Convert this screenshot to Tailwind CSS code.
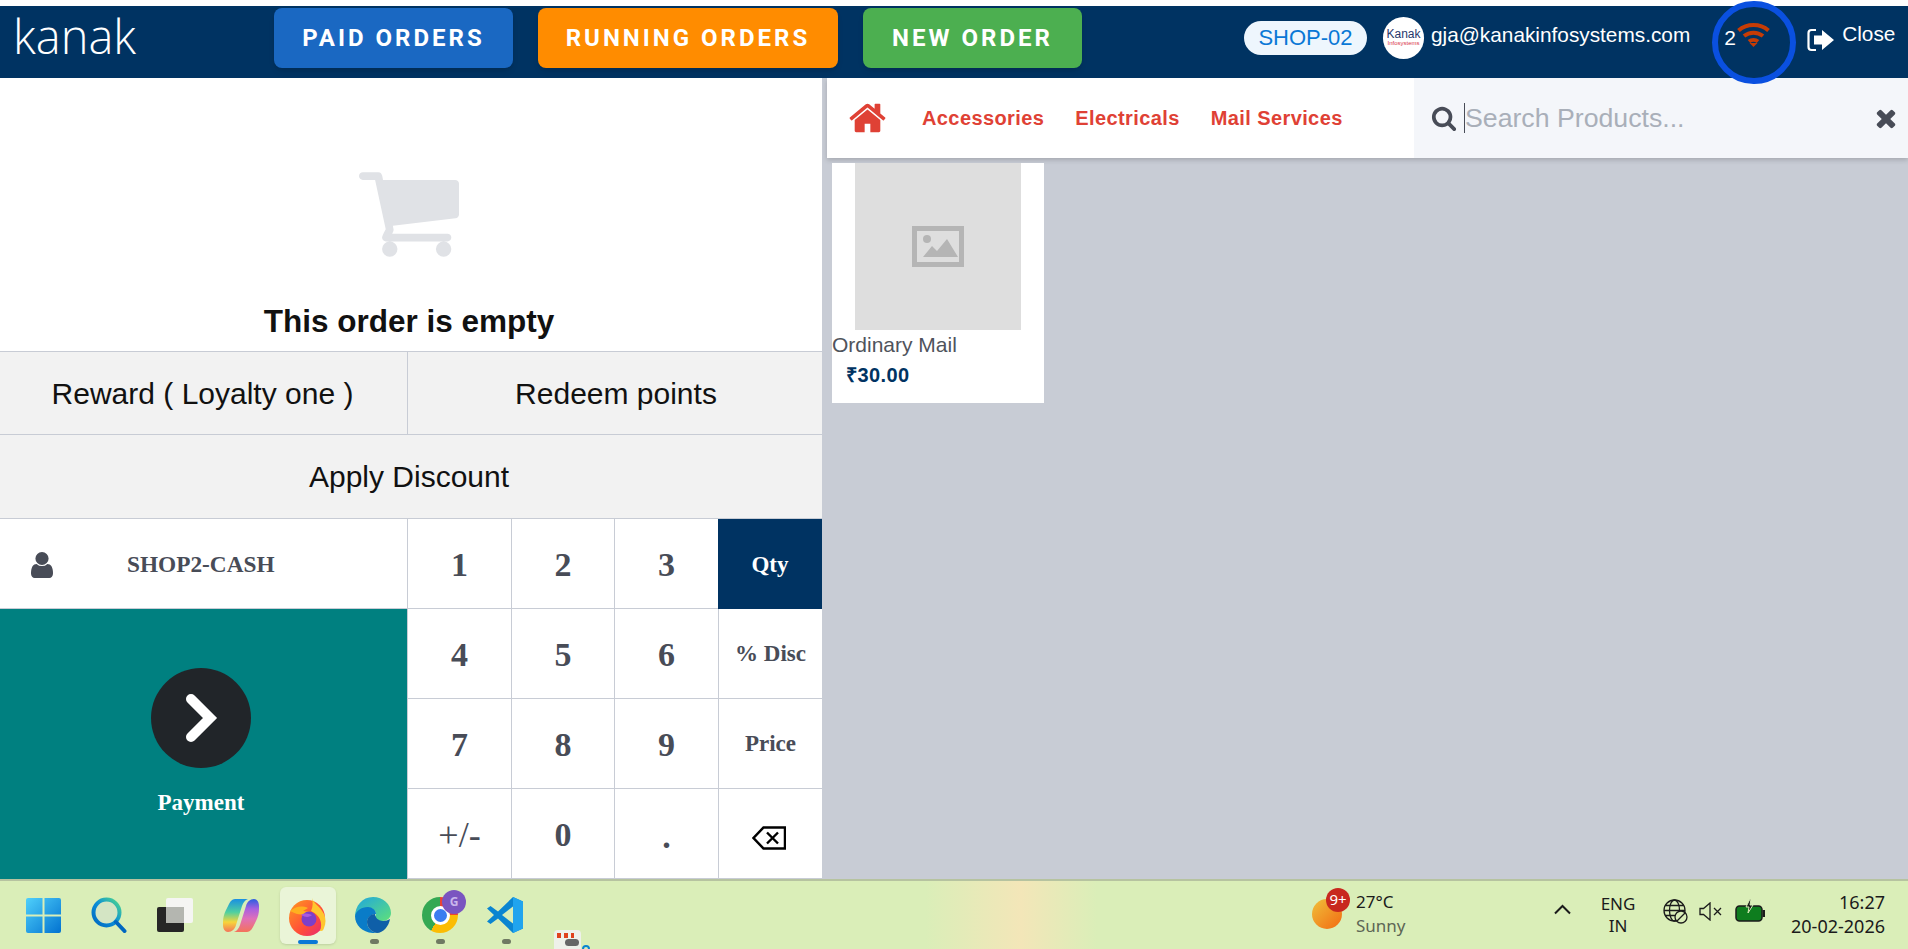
<!DOCTYPE html>
<html lang="en">
<head>
<meta charset="utf-8">
<title>POS</title>
<script src="https://cdn.jsdelivr.net/npm/@tailwindcss/browser@4"></script>
</head>
<body class="w-[1908px] h-[949px] overflow-hidden bg-white font-['Liberation_Sans',Arial,sans-serif]">
<div class="h-[6px] bg-white"></div>
<!-- header -->
<header class="relative h-[72px] bg-[#003362] flex items-start text-white">
  <div class="w-[274px] h-full pl-[13px] pt-[1px] font-['Open_Sans',sans-serif] font-light text-[47px] leading-[58px]">kanak</div>
  <div class="flex gap-[25px] pt-[2px] font-['Roboto',sans-serif] font-bold text-[24px] tracking-[3px]">
    <button class="w-[239px] h-[60px] rounded-lg bg-[#1a68c2] shadow-md">PAID ORDERS</button>
    <button class="w-[300px] h-[60px] rounded-lg bg-[#ff8c00] shadow-md">RUNNING ORDERS</button>
    <button class="w-[219px] h-[60px] rounded-lg bg-[#4caf50] shadow-md">NEW ORDER</button>
  </div>
  <div class="ml-[162px] mt-[15px] w-[123px] h-[34px] rounded-full bg-[#eef6fd] text-[#0a78d6] text-[22px] leading-[34px] text-center">SHOP-02</div>
  <div class="ml-[16px] mt-[11px] w-[41px] h-[42px] rounded-full bg-white flex flex-col items-center justify-center text-center overflow-hidden">
    <span class="text-[#27386b] text-[12px] leading-[11px] font-medium">Kanak</span>
    <span class="text-[#d8344a] text-[6px] leading-[7px] whitespace-nowrap">Infosystems</span>
  </div>
  <div class="ml-[7px] mt-[15px] text-[20.8px] leading-[28px] whitespace-nowrap">gja@kanakinfosystems.com</div>
  <div class="ml-[34px] mt-[20px] w-[13px] text-[21px] leading-[24px]">2</div>
  <svg class="mt-[17px] w-[33px] h-[24px]" viewBox="0 0 33 24" fill="none" stroke="#c63c05" stroke-width="4"><path d="M1.500 7.500C10 .2 23 .2 31.500 7.500"/><path d="M7 13C12.500 8.500 20.500 8.500 26 13"/><path d="M12 18.500C14.500 16.500 18.500 16.500 21 18.500"/><path d="M12.500 20h8l-4 4z" fill="#c63c05" stroke="none"/></svg>
  <svg class="ml-[37px] mt-[21px] w-[27px] h-[26px]" viewBox="0 0 27 26"><path d="M9 3H4.500C2.500 3 1.500 4 1.500 6v14c0 2 1 3 3 3H9" fill="none" stroke="#fff" stroke-width="2.200"/><path d="M7 8.500h8V3l12 10-12 10v-5.500H7z" fill="#fff"/></svg>
  <div class="ml-[8px] mt-[14px] text-[20.8px] leading-[28px]">Close</div>
  <!-- highlight ring over the header -->
  <div class="absolute left-[1712px] top-[-5px] w-[84px] h-[83px] rounded-full border-[6px] border-[#0a50e0]"></div>
</header>
<!-- main -->
<main class="h-[801px] flex bg-[#c8ccd5]">
  <section class="w-[822px] bg-white flex flex-col">
    <div class="h-[273px] pr-[4px] flex flex-col items-center">
      <svg class="mt-[94px] w-[100px] h-[85px]" viewBox="64 256 1664 1408" fill="#e0e2e6"><path d="M704 1536q0 52-38 90t-90 38-90-38-38-90 38-90 90-38 90 38 38 90zm896 0q0 52-38 90t-90 38-90-38-38-90 38-90 90-38 90 38 38 90zm128-1088v512q0 24-16.500 42.500t-40.500 21.500l-1044 122q13 60 13 70 0 16-24 64h920q26 0 45 19t19 45-19 45-45 19h-1024q-26 0-45-19t-19-45q0-11 8-31.500t16-36 21.500-40 15.500-29.500l-177-823h-204q-26 0-45-19t-19-45 19-45 45-19h256q16 0 28.500 6.500t19.500 15.500 13 24.500 8 26 5.500 29.500 4.500 26h1201q26 0 45 19t19 45z"/></svg>
      <h2 class="mt-[44px] text-[31.5px] leading-[40px] font-bold text-[#111] whitespace-nowrap">This order is empty</h2>
    </div>
    <div class="h-[83px] flex border-t border-[#c8ccd5] bg-[#f2f2f2] text-[#111] text-[30px]">
      <div class="w-[408px] pr-[2px] border-r border-[#c8ccd5] flex items-center justify-center">Reward ( Loyalty one )</div>
      <div class="flex-1 pl-[2px] flex items-center justify-center">Redeem points</div>
    </div>
    <div class="h-[85px] pr-[4px] flex items-center justify-center border-t border-[#c8ccd5] border-b bg-[#f2f2f2] text-[#111] text-[30px]">Apply Discount</div>
    <div class="flex-1 flex font-['Liberation_Serif',serif] font-bold text-[#484c57]">
      <div class="w-[407px] flex flex-col">
        <div class="h-[90px] pt-[2px] flex items-center border-b border-[#c8ccd5] text-[23.3px]">
          <svg class="ml-[31px] w-[22px] h-[26px]" viewBox="256 128 1280 1536" preserveAspectRatio="none" fill="#484c57"><path d="M1536 1399q0 109-62.500 187t-150.500 78h-854q-88 0-150.500-78t-62.500-187q0-85 8.500-160.500t31.500-152 58.500-131 94-89 134.500-34.500q131 128 313 128t313-128q76 0 134.500 34.500t94 89 58.500 131 31.500 152 8.500 160.500zm-256-887q0 159-112.500 271.500t-271.500 112.500-271.500-112.500-112.500-271.500 112.500-271.500 271.500-112.500 271.500 112.500 112.500 271.500z"/></svg>
          <span class="ml-[74px]">SHOP2-CASH</span>
        </div>
        <div class="flex-1 bg-[#008080] flex flex-col items-center pt-[59px] pr-[5px] text-white">
          <div class="w-[100px] h-[100px] rounded-full bg-[#212529] flex items-center justify-center">
            <svg class="w-[34px] h-[50px]" viewBox="0 0 34 50" fill="none" stroke="#fff" stroke-width="10" stroke-linecap="round" stroke-linejoin="miter"><path d="M7 6l19 19L7 44"/></svg>
          </div>
          <div class="mt-[21px] text-[23px] leading-[28px]">Payment</div>
        </div>
      </div>
      <div class="w-[415px] grid grid-cols-[104px_103px_104px_104px] grid-rows-[90px_90px_90px_90px] text-[34px]">
        <div class="pt-[2px] border-l border-b border-[#c8ccd5] flex items-center justify-center">1</div>
        <div class="pt-[2px] border-l border-b border-[#c8ccd5] flex items-center justify-center">2</div>
        <div class="pt-[2px] border-l border-b border-[#c8ccd5] flex items-center justify-center">3</div>
        <div class="pt-[2px] bg-[#003362] text-white text-[23px] flex items-center justify-center">Qty</div>
        <div class="pt-[2px] border-l border-b border-[#c8ccd5] flex items-center justify-center">4</div>
        <div class="pt-[2px] border-l border-b border-[#c8ccd5] flex items-center justify-center">5</div>
        <div class="pt-[2px] border-l border-b border-[#c8ccd5] flex items-center justify-center">6</div>
        <div class="pt-[2px] border-l border-b border-[#c8ccd5] text-[23px] flex items-center justify-center">% Disc</div>
        <div class="pt-[2px] border-l border-b border-[#c8ccd5] flex items-center justify-center">7</div>
        <div class="pt-[2px] border-l border-b border-[#c8ccd5] flex items-center justify-center">8</div>
        <div class="pt-[2px] border-l border-b border-[#c8ccd5] flex items-center justify-center">9</div>
        <div class="pt-[2px] border-l border-b border-[#c8ccd5] text-[23px] flex items-center justify-center">Price</div>
        <div class="pt-[3px] border-l border-b border-[#c8ccd5] font-normal text-[36px] flex items-center justify-center">+/-</div>
        <div class="pt-[1px] border-l border-b border-[#c8ccd5] flex items-center justify-center">0</div>
        <div class="pt-[5px] border-l border-b border-[#c8ccd5] flex items-center justify-center">.</div>
        <div class="pt-[8px] pr-[4px] border-l border-b border-[#c8ccd5] flex items-center justify-center">
          <svg class="w-[34px] h-[24px]" viewBox="0 0 34 24" fill="none" stroke="#000"><path d="M33 1.500H11.500L1.500 12l10 10.500H33z" stroke-width="2.500"/><path d="M15 6.500l11 11M26 6.500l-11 11" stroke-width="2.400"/></svg>
        </div>
      </div>
    </div>
  </section>
  <section class="ml-[5px] flex-1 flex flex-col">
    <div class="h-[80px] bg-white shadow-[0_2px_5px_rgba(0,0,0,0.18)] flex items-center">
      <svg class="ml-[22px] w-[37px] h-[40px]" viewBox="0 0 1664 1792" preserveAspectRatio="none" fill="#df4135"><path d="M1408 992v480q0 26-19 45t-45 19h-384v-384h-256v384h-384q-26 0-45-19t-19-45v-480q0-1 .500-3t.500-3l575-474 575 474q1 2 1 6zm223-69l-62 74q-8 9-21 11h-3q-13 0-21-7l-692-577-692 577q-12 8-24 7-13-2-21-11l-62-74q-8-10-7-23.500t11-21.500l719-599q32-26 76-26t76 26l244 204v-195q0-14 9-23t23-9h192q14 0 23 9t9 23v408l219 182q10 8 11 21.500t-7 23.500z"/></svg>
      <nav class="ml-[36px] flex gap-[31px] text-[20px] font-bold text-[#df4135] tracking-[0.4px]">
        <span>Accessories</span><span>Electricals</span><span>Mail Services</span>
      </nav>
      <div class="ml-auto w-[494px] h-full bg-[#f4f6fa] flex items-center">
        <svg class="ml-[17px] w-[26px] h-[26px]" viewBox="0 0 1792 1792" fill="#484c57"><path d="M1216 832q0-185-131.500-316.500t-316.500-131.500-316.500 131.500-131.500 316.500 131.500 316.500 316.500 131.500 316.500-131.500 131.500-316.500zm512 832q0 52-38 90t-90 38q-54 0-90-38l-343-342q-179 124-399 124-143 0-273.500-55.500t-225-150-150-225-55.500-273.500 55.500-273.500 150-225 225-150 273.500-55.500 273.500 55.500 225 150 150 225 55.500 273.500q0 220-124 399l343 343q37 37 37 90z"/></svg>
        <span class="ml-[7px] w-px h-[30px] bg-[#484c57]"></span>
        <span class="text-[26.700px] text-[#a9afb9] whitespace-nowrap">Search Products...</span>
        <svg class="ml-auto mr-[8px] w-[28px] h-[28px]" viewBox="0 0 1792 1792" fill="#484c57"><path d="M1490 1322q0 40-28 68l-136 136q-28 28-68 28t-68-28l-294-294-294 294q-28 28-68 28t-68-28l-136-136q-28-28-28-68t28-68l294-294-294-294q-28-28-28-68t28-68l136-136q28-28 68-28t68 28l294 294 294-294q28-28 68-28t68 28l136 136q28 28 28 68t-28 68l-294 294 294 294q28 28 28 68z"/></svg>
      </div>
    </div>
    <article class="ml-[5px] mt-[5px] w-[212px] h-[240px] bg-white">
      <div class="mx-auto w-[166px] h-[167px] bg-[#dedede] flex items-center justify-center">
        <svg class="w-[52px] h-[41px]" viewBox="0 0 52 41"><rect x="2.500" y="2.500" width="47" height="36" fill="none" stroke="#b5b5b5" stroke-width="5"/><circle cx="15" cy="13" r="4" fill="#b5b5b5"/><path d="M11 31l9-11 5 5 10-12 11 18z" fill="#b5b5b5"/></svg>
      </div>
      <div class="mt-[2px] text-[21px] leading-[26px] text-[#4f535c] whitespace-nowrap">Ordinary Mail</div>
      <div class="mt-[4px] ml-[14px] text-[20px] leading-[26px] font-bold text-[#003362] tracking-[0.4px]">₹30.00</div>
    </article>
  </section>
</main>
<!-- taskbar -->
<footer class="h-[70px] border-t-2 border-[#b6c3a0] bg-[linear-gradient(90deg,#daeeb8_0%,#daeeb8_48.500%,#f3e6b8_53.500%,#daeeb8_57.500%,#daeeb8_100%)] flex items-start font-['Noto_Sans',sans-serif] text-[#1b1b1b] relative">
  <div class="ml-[10px] flex">
    <div class="relative w-[66px] h-[68px] flex justify-center pt-[17px]">
      <svg class="w-[35px] h-[35px]" viewBox="0 0 35 35"><defs><linearGradient id="w" x1="0" y1="0" x2="1" y2="1"><stop offset="0" stop-color="#4fd0fb"/><stop offset="1" stop-color="#0272d0"/></linearGradient></defs><path d="M2 0h14.500v16.500H0V2a2 2 0 0 1 2-2zM18.500 0H33a2 2 0 0 1 2 2v14.500H18.500zM0 18.500h16.500V35H2a2 2 0 0 1-2-2zM18.500 18.500H35V33a2 2 0 0 1-2 2H18.500z" fill="url(#w)"/></svg>
    </div>
    <div class="relative w-[66px] h-[68px] flex justify-center pt-[16px]">
      <svg class="w-[36px] h-[36px]" viewBox="0 0 36 36" fill="none"><defs><linearGradient id="s" x1="1" y1="0" x2="0" y2="1"><stop offset="0" stop-color="#4fd98a"/><stop offset=".5" stop-color="#0a8ed8"/><stop offset="1" stop-color="#0067c0"/></linearGradient></defs><circle cx="15.500" cy="15.500" r="13" fill="#d4e5c4" stroke="url(#s)" stroke-width="4"/><path d="M25 25l8.500 9" stroke="#0067c0" stroke-width="4" stroke-linecap="round"/></svg>
    </div>
    <div class="relative w-[66px] h-[68px] flex justify-center pt-[17px]">
      <svg class="w-[36px] h-[35px]" viewBox="0 0 36 35"><rect x="0" y="9" width="27" height="25" rx="2" fill="#262626"/><rect x="9" y="0" width="27" height="25" rx="2" fill="#f5f5f3"/><rect x="9" y="9" width="18" height="16" fill="#b4b6b0"/></svg>
    </div>
    <div class="relative w-[66px] h-[68px] flex justify-center pt-[17px]">
      <svg class="w-[36px] h-[35px]" viewBox="0 0 36 35"><defs><linearGradient id="c1" x1="0" y1="0" x2="0" y2="1"><stop offset="0" stop-color="#1a8fe3"/><stop offset=".4" stop-color="#4fd0a0"/><stop offset=".7" stop-color="#f7d53a"/><stop offset="1" stop-color="#f4735a"/></linearGradient><linearGradient id="c2" x1="0" y1="0" x2="0" y2="1"><stop offset="0" stop-color="#f4735a"/><stop offset=".4" stop-color="#e070b8"/><stop offset=".7" stop-color="#a860e0"/><stop offset="1" stop-color="#2a5ee0"/></linearGradient></defs><path d="M13 1H25C22 2 20 5 19 8L13 27C12 31 9 34 5 34C2 34 0 31 0 27V24C0 20 1 16 3 12L6 6C8 2 10 1 13 1Z" fill="url(#c1)"/><path d="M13 1H25C22 2 20 5 19 8L13 27C12 31 9 34 5 34C2 34 0 31 0 27V24C0 20 1 16 3 12L6 6C8 2 10 1 13 1Z" fill="url(#c2)" transform="rotate(180 18 17.500)"/></svg>
    </div>
    <div class="relative w-[66px] h-[68px] flex justify-center pt-[17px]">
      <div class="absolute left-[6px] top-[6px] w-[56px] h-[57px] rounded-md bg-[#eaf5d8] shadow-sm"></div>
      <svg class="relative w-[38px] h-[38px]" viewBox="0 0 38 38"><defs><linearGradient id="f" x1="0" y1="0" x2="1" y2="1"><stop offset="0" stop-color="#ff9a1f"/><stop offset=".6" stop-color="#ff4b3a"/><stop offset="1" stop-color="#e2267d"/></linearGradient></defs><circle cx="19" cy="20" r="18" fill="url(#f)"/><path d="M24 0c1 5 8 8 12 16 2 5 2 9 0 14-1 3-2 3-4 3 3-8 0-16-9-20 2-4 2-9 1-13z" fill="#ffc62e"/><path d="M2 13c5-4 11-6 18-3l-5 3 8 1c-6 3-12 4-21-1z" fill="#ffb01f"/><circle cx="21" cy="21" r="7.500" fill="#7d3fc8"/><path d="M13 17c3-2 7-2 11 0-2 2-6 3-11 0z" fill="#a85ae0"/></svg>
      <div class="absolute left-[24px] top-[59px] w-[20px] h-[4px] rounded-full bg-[#0a78d6]"></div>
    </div>
    <div class="relative w-[66px] h-[68px] flex justify-center pt-[16px]">
      <svg class="w-[36px] h-[36px]" viewBox="0 0 36 36"><defs><linearGradient id="e1" x1="0" y1="0" x2="1" y2="1"><stop offset="0" stop-color="#1fa6df"/><stop offset="1" stop-color="#5fe07a"/></linearGradient></defs><path d="M18 0c10 0 18 7 18 16 0 5-4 8-9 8-4 0-7-2-7-4 0-1 1-1 1-3 0-3-3-6-7-6C7 11 1 16 0 20 0 9 7 0 18 0z" fill="url(#e1)"/><path d="M0 19c1-5 6-9 13-9 4 0 8 3 8 7-4 0-9 3-9 8 0 5 4 10 10 11C10 37 0 30 0 19z" fill="#0a7cc8"/><path d="M22 36c-6-1-10-6-10-11 0-5 4-8 8-8 0 3 3 7 8 7 3 0 5-1 7-2-1 7-7 14-13 14z" fill="#0f5fa8"/></svg>
      <div class="absolute left-[30px] top-[58px] w-[9px] h-[5px] rounded-full bg-[#6f7a62]"></div>
    </div>
    <div class="relative w-[66px] h-[68px] flex justify-start pl-[16px] pt-[16px]">
      <div class="w-[36px] h-[36px] rounded-full bg-[conic-gradient(#ea4335_-30deg_90deg,#fbbc04_90deg_210deg,#34a853_210deg_330deg)] flex items-center justify-center">
        <div class="w-[19px] h-[19px] rounded-full bg-[#3b7df0] border-[3px] border-white"></div>
      </div>
      <div class="absolute left-[36px] top-[9px] w-[24px] h-[24px] rounded-full bg-[#7a55c0] text-[#c9b6ec] text-[12px] font-bold leading-[24px] text-center">G</div>
      <div class="absolute left-[30px] top-[58px] w-[9px] h-[5px] rounded-full bg-[#6f7a62]"></div>
    </div>
    <div class="relative w-[66px] h-[68px] flex justify-center pt-[16px]">
      <svg class="w-[36px] h-[36px]" viewBox="0 0 36 36"><path d="M26 0l10 4.500v27L26 36 11 21.500 3.500 27 0 24.500 7 18 0 11.500 3.500 9l7.500 5.500z" fill="#0a85d1"/><path d="M26 9.500L15 18l11 8.500z" fill="#daeeb8"/><path d="M26 0l10 4.500v27L26 36z" fill="#20a4ee"/></svg>
      <div class="absolute left-[30px] top-[58px] w-[9px] h-[5px] rounded-full bg-[#6f7a62]"></div>
    </div>
  </div>
  <div class="absolute left-[554px] top-[49px] w-[27px] h-[19px] rounded-t-sm bg-[#eef1ea] overflow-hidden">
    <div class="ml-[3px] mt-[3px] w-[17px] h-[5px] bg-[repeating-linear-gradient(90deg,#e0421c_0_4px,transparent_4px_7px)]"></div>
    <div class="ml-[11px] mt-[1px] w-[14px] h-[7px] rounded-sm bg-[#666]"></div>
  </div>
  <div class="absolute left-[582px] top-[64px] w-[8px] h-[8px] rounded-full border-2 border-[#0a85d1]"></div>
  <div class="ml-[774px] relative w-[44px] h-[68px]">
    <div class="absolute left-0 top-[18px] w-[30px] h-[30px] rounded-full bg-[linear-gradient(135deg,#f0c03a,#f26a12)]"></div>
    <div class="absolute left-[14px] top-[7px] w-[24px] h-[24px] rounded-full bg-[#c8281e] text-white text-[15px] leading-[23px] text-center">9+</div>
  </div>
  <div class="text-[17px] leading-[24px] pt-[9px]">
    <div>27°C</div>
    <div class="text-[#5d6655]">Sunny</div>
  </div>
  <svg class="ml-[148px] mt-[23px] w-[17px] h-[11px]" viewBox="0 0 17 11" fill="none" stroke="#1b1b1b" stroke-width="2"><path d="M1 9.500l7.500-7.500 7.500 7.500"/></svg>
  <div class="ml-[30px] w-[35px] text-center text-[17px] leading-[22px] pt-[12px]">
    <div>ENG</div>
    <div>IN</div>
  </div>
  <svg class="ml-[27px] mt-[18px] w-[25px] h-[25px]" viewBox="0 0 25 25" fill="none" stroke="#1b1b1b" stroke-width="1.300"><circle cx="11.500" cy="11.500" r="10.500"/><ellipse cx="11.500" cy="11.500" rx="5" ry="10.500"/><path d="M1 11.500h21M2.500 6.500h18M2.500 16.500h18"/><circle cx="18" cy="18" r="6" fill="#daeeb8"/><path d="M14 22l8-8"/></svg>
  <svg class="ml-[11px] mt-[21px] w-[24px] h-[19px]" viewBox="0 0 24 19" fill="none" stroke="#1b1b1b" stroke-width="1.300"><path d="M1 6.500h3.500L11 1v17l-6.500-5.500H1z"/><path d="M15 6l7 7M22 6l-7 7"/></svg>
  <svg class="ml-[12px] mt-[17px] w-[31px] h-[26px]" viewBox="0 0 31 26"><rect x="1" y="8" width="26" height="15" rx="3.500" fill="#0e7d1e" stroke="#1b1b1b" stroke-width="1.500"/><rect x="27.500" y="12" width="2.500" height="7" fill="#1b1b1b"/><path d="M15 1l-4 8h3l-1 6 5-8h-3l1-6z" fill="#1b1b1b" stroke="#daeeb8" stroke-width="1"/></svg>
  <div class="ml-auto mr-[23px] text-right text-[18px] leading-[24px] pt-[9px]">
    <div>16:27</div>
    <div>20-02-2026</div>
  </div>
</footer>
</body>
</html>
